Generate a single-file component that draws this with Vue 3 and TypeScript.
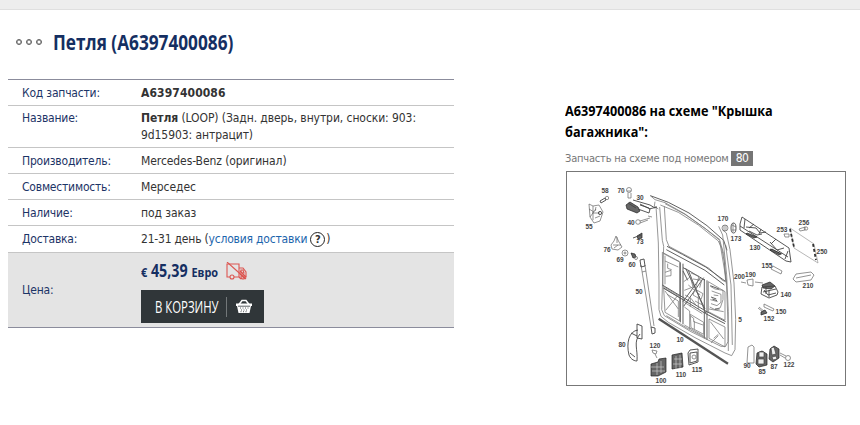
<script setup lang="ts">
import { ref } from 'vue'

interface Label {
  n: string
  x: number
  y: number
}

const partCode = ref('A6397400086')

const labels: Label[] = [
  { n: '58', x: 605, y: 193 }, { n: '70', x: 621, y: 193 }, { n: '30', x: 640, y: 200 },
  { n: '55', x: 589, y: 229 }, { n: '40', x: 631, y: 225 }, { n: '73', x: 640, y: 244 },
  { n: '76', x: 607, y: 252 }, { n: '69', x: 620, y: 262 }, { n: '60', x: 632, y: 267 },
  { n: '50', x: 639, y: 294 }, { n: '170', x: 723, y: 221 }, { n: '173', x: 736, y: 241 },
  { n: '130', x: 755, y: 250 }, { n: '253', x: 782, y: 232 }, { n: '256', x: 804, y: 225 },
  { n: '250', x: 822, y: 254 }, { n: '155', x: 767, y: 268 }, { n: '200', x: 739.5, y: 279 },
  { n: '190', x: 750.5, y: 277 }, { n: '210', x: 808, y: 288 }, { n: '140', x: 786, y: 297 },
  { n: '150', x: 781, y: 314 }, { n: '152', x: 769, y: 321 }, { n: '5', x: 740, y: 322 },
  { n: '10', x: 680, y: 342 }, { n: '80', x: 622, y: 347 }, { n: '120', x: 655, y: 348 },
  { n: '100', x: 661, y: 383 }, { n: '110', x: 681, y: 377 }, { n: '115', x: 697, y: 372 },
  { n: '90', x: 747, y: 368 }, { n: '85', x: 762, y: 374 }, { n: '87', x: 774, y: 369 },
  { n: '122', x: 789, y: 367 },
]
</script>

<template>
  <div class="page">
    <div class="topbar"></div>
    <div class="content">
      <div class="product">
        <div class="head">
          <span class="dots"><i></i><i></i><i></i></span>
          <h1><span>Петля ({{ partCode }})</span></h1>
        </div>
        <dl class="info">
          <div class="row">
            <dt>Код запчасти:</dt>
            <dd><b class="code">{{ partCode }}</b></dd>
          </div>
          <div class="row name">
            <dt>Название:</dt>
            <dd><b>Петля</b> (LOOP) (Задн. дверь, внутри, сноски: 903:<br>9d15903: антрацит)</dd>
          </div>
          <div class="row">
            <dt>Производитель:</dt>
            <dd>Mercedes-Benz (оригинал)</dd>
          </div>
          <div class="row">
            <dt>Совместимость:</dt>
            <dd>Мерседес</dd>
          </div>
          <div class="row">
            <dt>Наличие:</dt>
            <dd>под заказ</dd>
          </div>
          <div class="row delivery">
            <dt>Доставка:</dt>
            <dd>21-31 день (<a>условия доставки</a><span class="help">?</span>)</dd>
          </div>
          <div class="row price">
            <dt>Цена:</dt>
            <dd>
              <div class="sum">
                <span class="amount"><small>€</small> 45,39 <small>Евро</small></span>
                <svg class="truck" viewBox="0 0 22 18" width="22" height="18">
                  <path d="M4 15H1V2h12v13H8M13 6h4l3 4v5h-1M15 8h2l1 3h-3z" />
                  <path d="M14 12l4 4M16 11l4 4M13 15l2 2M14 9l3 3" />
                  <circle cx="6" cy="15" r="2" />
                  <circle cx="17" cy="15" r="2" />
                  <path d="M1 0l19 17" />
                </svg>
              </div>
              <button class="buy">
                <span class="buy-text"><span>В КОРЗИНУ</span></span>
                <svg viewBox="0 0 16 15" width="16" height="15">
                  <path class="handle" d="M3 5.500L6 1.500h4l3 4" />
                  <path class="body" d="M0 4.500h16v2.500h-1l-1.500 7h-11L1 7H0z" />
                  <path class="mesh" d="M2 7.200h12M4 9h1M6.500 9h1M9 9h1M11.500 9h1M5 11h1M7.500 11h1M10 11h1M4.500 12.700h1M7 12.700h1M9.500 12.700h1" />
                </svg>
              </button>
            </dd>
          </div>
        </dl>
      </div>

      <div class="scheme">
        <h2><span>{{ partCode }} на схеме "Крышка<br>багажника":</span></h2>
        <p>Запчасть на схеме под номером <b>80</b></p>
        <svg class="drawing" viewBox="566 171 280 215" width="280" height="215">
          <!-- door, drawn at three times its size -->
          <g class="door" transform="translate(645 185) scale(0.3333)">
            <path class="heavy" d="M16 32l54 20 62 32 54 38 50 44 10 30" />
            <path d="M16 32l14 12 30 9 60 34 64 46 42 32M30 50l-2 14 12 8" />
            <path d="M33 64l7 110 2 120 0 80 6 20 22 18 80 46 90 46 20 8 10-18 2-90-5-110-12-100-11-50-10-8" />
            <path d="M44 66l8 100 4 18-6 190 8 18 80 48 90 44 14 0 7-14 1-90-5-110-12-120-12-26" />
            <path d="M58 64l6 100 8 20 60 32 60 34 40 36 10 4-4-60-8-40-10-22-60-48-60-38-54-22" />
            <path class="heavy" d="M66 184l46 24 70 38 58 42M64 194l56 30 60 32 58 44" />
            <path d="M60 56l60 32 60 42 44 36 12 40 8 90M224 168l20 120 6 150 0 60M242 180l16 120 4 180" />
            <path d="M52 202l2 102 50 30V230zM56 206l46 24M60 212v86M60 228l40 18M60 262l18-6v16l-16 2M68 236v14l12 4" />
            <path d="M56 310l48 28v70l-44-26zM60 318l40 54M62 376l36-44M66 328l34 20v48" />
            <path class="heavy" d="M106 232v180M114 236v182M178 282v178M186 286v178M52 300l60 36 70 42 60 32M54 308l60 36 68 42 58 30" />
            <path class="heavy" d="M114 248l16 8 52 128M122 250l58 122M176 278l-60 86M168 276l-54 74M130 256l50 30M114 258l14 28" />
            <path d="M116 290l20-14 8 30-26 10M138 264l24 10-10 34M150 312l24 14-6 18-24-14zM120 330l18 10 16 22M130 300l36 30M144 282l26 4-6 22M118 352l54 34M136 340v26M160 330v42M150 348l26 14" />
            <path d="M190 290l50 30v86l-50-26zM196 304l14 8 24 4v28l-8 24-16 6-16-8M200 318l28 10v24l-12 10-18-6M196 344l22 6M206 330l14 2M192 372l44 8" />
            <path class="heavy" d="M196 302l26 10M210 372l14 0M202 342l14 5M198 336l16 6" />
            <path d="M192 402l48 24v60l-48-26zM198 474l22-22M206 460l14-12M196 410l40 52" />
            <path d="M136 388l40 24v36l-38-20zM138 394l8 6v10l28 10M118 366l16 12v54M148 408v24M118 420l60 34M64 392l60 36 60 32" />
            <path class="rail" d="M41 401L249 536" />
          </g>
          <!-- latch plate 55 and its screw -->
          <g class="part">
            <path d="M589 204l4 2 6-1 4 7-3 9-6 2-4-6z" />
            <path d="M592 213h8M593 206v14M589 209l5 3M590 217l6-8M595 218l5-2M596 207l-1 4" />
            <circle class="bold" cx="600" cy="213" r="1.600" />
            <path class="bold" d="M600 201l5-3 1 2-5 3z" />
            <circle cx="607" cy="198" r="1.700" />
          </g>
          <!-- hinge 30 with bolts -->
          <g class="part">
            <circle cx="629" cy="190" r="2.500" />
            <path d="M628 193v5h3v-5M627 191h4" />
            <path class="dark" d="M626 205l4-3 8 5 2 4-3 2-10-4z" />
            <path d="M633 200l17 5 5 3M638 209l11 4 1-4-10-5M628 203l8 5M640 205l9 3M649 209l8-2" class="bold" />
            <circle cx="638" cy="222" r="2.300" />
            <path d="M640 221l10-3M640 223l8-3M652 217l-4-1" />
            <path class="dark" d="M637 236l5-3v5l-4 1z" />
            <path d="M633 238l8-3" class="bold" />
          </g>
          <!-- gas spring -->
          <g class="part">
            <path d="M616 236l3 6 3 5-4 3-6-1-1-4 3-4zM613 245h8M617 237v6M614 248l4-3" />
            <circle cx="625" cy="253" r="3" /><circle cx="625" cy="253" r="1" />
            <path class="dark" d="M631 253l4 1 1 3-3 1z" />
            <circle cx="636" cy="258" r="1.500" />
            <path d="M641 265l10 62M645 265l9 61M642 272l4-1" />
            <path d="M640 260l4-1 1 7-4 1zM651 327l4 1v5l-3 1z" class="bold" />
          </g>
          <!-- handle 80 -->
          <g class="part">
            <path class="bold" d="M637 324l5 2v13l-5-1zM638 330c-9 1-12 13-9 25 2 5 6 6 8 6 1-12-4-19 3-27M631 333l6 3M630 353l5 4" />
          </g>
          <!-- trim 130 and plate 250 -->
          <g class="part">
            <circle cx="725" cy="228" r="3" /><path d="M724 225v6M726 225v6" />
            <ellipse cx="733.500" cy="228" rx="2.500" ry="5" class="bold" /><path d="M732 225l4 2M732 230h4M733 223v9" />
            <path d="M742 217l47 31 2 14-5-1-46-31v-6z" class="bold" />
            <path d="M740 226l48 31M745 219l-1 9M746 227l10 1 4 5 6-1M770 242l7 8 7-2M749 231l8 4 5-1M770 249l12 5M754 224l-5 4M761 229l-2 5M776 239l-5 5M788 251l-3 8" class="bold" />
            <path class="dark" d="M747 233l10 4-3 1-8-4zM772 249l9 5-2 1-9-5z" />
            <path class="plate" d="M790 228l24 16 4 19-24-15z" />
            <path d="M790 229l4 18M813 244l3 16" class="dash" />
            <path d="M784 234h5v3h-4zM799 229l6-2v3l-5 1z" />
            <circle cx="806" cy="228.500" r="1.700" />
            <path d="M773 266l9 5-1 3-10-5z" />
            <path d="M793 279l3-5 15-2 3 3-3 5-15 2zM796 278l15-3" />
          </g>
          <!-- lock 140, bulbs 150 and 152 -->
          <g class="part">
            <path d="M741 282l5 1M747 280l6-1v7l-5-1zM755 282l8 1" />
            <path class="dark" d="M762 285l8-3 5 4-4 3-8-1z" />
            <path d="M762 287l13-1 3 6-1 3-8 3-8-4zM764 290l4 5 8-2M769 290v7M763 292l13-3M766 287v7" class="bold" />
            <path d="M764 304l10 5-1 2-9-4zM758 308l5 4M759 307l6 5" />
            <path class="dark" d="M761 312l4-2 2 3-6 2z" />
          </g>
          <!-- brackets -->
          <g class="part">
            <path class="dark" d="M651 364l7-2 1-3 7-1v14l-8 4-7 0z" />
            <path class="mesh" d="M651 367h13M652 371h13M661 361v12M657 363v12" />
            <path class="dark" d="M672 355l10-2 1 14-11 2z" />
            <path class="mesh" d="M674 359h8M673 364h9M676 356v13M680 355v13" />
            <path d="M688 353l2-3 8-1v13l-9 3zM690 353l7-1v9l-7 2z" class="bold" />
            <circle cx="694" cy="357" r="2" />
            <path d="M652 350l5 1-1 3-3-1zM655 354l2 4" />
            <path d="M748 347l4-2 2 2v16h-7z" />
            <path class="dark" d="M757 353l5-2 5 3v11l-8 2-3-3z" />
            <path class="white" d="M759 352h5v5h-5zM758 359h6v5h-6z" />
            <path class="dark" d="M770 349l4-3 5 3v9l-6 4-4-3z" />
            <path class="white" d="M771 348l3-1 2 7-4 1zM772 357l4-1 1 3-4 1z" />
            <path d="M780 353l6 3M780 355l5 3" />
            <circle cx="788" cy="358" r="2.500" />
          </g>
          <text v-for="l in labels" :key="l.n" :x="l.x" :y="l.y">{{ l.n }}</text>
        </svg>
      </div>
    </div>
  </div>
</template>

<style>
body {
  margin: 0;
  background: #fff;
}
</style>

<style scoped>
.page {
  width: 860px;
  height: 425px;
  overflow: hidden;
  font-family: "DejaVu Sans Condensed", "Noto Sans", sans-serif;
  font-size: 12px;
  color: #333;
}
.topbar {
  height: 9px;
  background: #ededed;
  border-bottom: 1px solid #dfdfdf;
}
.content {
  display: flex;
  gap: 111px;
  padding-left: 8px;
}
.product {
  width: 446px;
}
.head {
  display: flex;
  align-items: center;
  height: 65px;
  padding-left: 8px;
  padding-bottom: 4px;
}
.dots {
  display: flex;
  gap: 4px;
  width: 37px;
  margin-bottom: 1px;
}
.dots i {
  width: 6px;
  height: 6px;
  border: 1.5px solid #5c5c5c;
  border-radius: 50%;
  box-sizing: border-box;
  box-shadow: inset 0 0 0 0.5px #777;
}
h1, h2 {
  margin: 0;
  font-family: "Open Sans", sans-serif;
  font-weight: 700;
}
h1 {
  margin-top: -2px;
  font-size: 21px;
  line-height: 28px;
  color: #152f62;
  white-space: nowrap;
}
h1 span, h2 span, .buy-text span, .amount {
  display: inline-block;
  transform-origin: left center;
}
h1 span {
  transform: scaleX(0.82);
}
.info {
  margin: 0;
  border-top: 1px solid #8b8c9c;
  border-bottom: 1px solid #8b8c9c;
}
.row {
  display: flex;
  align-items: center;
  height: 25px;
  border-bottom: 1px solid #c5c5c5;
}
dt {
  width: 119px;
  padding-left: 14px;
  color: #1c3466;
  letter-spacing: -0.2px;
  white-space: nowrap;
}
dd {
  margin: 0;
  letter-spacing: -0.08px;
  white-space: nowrap;
}
.code {
  letter-spacing: 0.1px;
}
.name {
  height: 41px;
  line-height: 17px;
}
.name dt {
  align-self: flex-start;
  padding-top: 4px;
}
.delivery {
  height: 26px;
}
.delivery dd {
  display: flex;
  align-items: center;
  letter-spacing: -0.2px;
  white-space: pre;
}
a {
  color: #1c65ad;
}
.help {
  width: 13px;
  height: 13px;
  margin: 0 1px 0 3px;
  border: 1.5px solid #222;
  border-radius: 50%;
  font-weight: 700;
  font-size: 11px;
  line-height: 13px;
  letter-spacing: 0;
  text-align: center;
}
.price {
  height: 74px;
  border-bottom: 0;
  background: #e4e4e4;
}
.sum {
  display: flex;
  height: 36px;
  align-items: center;
}
.sum .amount {
  margin-top: -1px;
}
.sum .truck {
  margin-top: -3px;
}
.amount {
  width: 85px;
  font: 700 17px/24px "Open Sans", sans-serif;
  letter-spacing: 0;
  color: #152f62;
  transform: scaleX(0.84);
}
.amount small {
  font-size: 13px;
}
.truck {
  fill: none;
  stroke: #dc5550;
  stroke-width: 1.1;
}
.buy {
  display: flex;
  align-items: center;
  width: 123px;
  height: 33px;
  margin: 0 0 3px;
  padding: 0 0 0 14px;
  border: 0;
  background: #303639;
  color: #fff;
}
.buy-text {
  width: 71px;
  height: 20px;
  margin-right: 9px;
  border-right: 1px solid #727779;
  font: 16px/20px "Open Sans", sans-serif;
  text-align: left;
  white-space: nowrap;
}
.buy-text span {
  transform: scaleX(0.71);
}
.handle {
  fill: none;
  stroke: #fff;
  stroke-width: 1.5;
}
.buy .body {
  fill: #fff;
}
.buy .mesh {
  stroke: #303639;
  stroke-width: 0.8;
}
.scheme {
  width: 282px;
  padding-top: 90px;
}
h2 {
  font-size: 15px;
  line-height: 21px;
  color: #000;
  white-space: nowrap;
}
h2 span {
  transform: scaleX(0.845);
}
.scheme p {
  display: flex;
  align-items: center;
  height: 15px;
  margin: 9px 0 5px;
  font-size: 11px;
  letter-spacing: -0.19px;
  color: #777;
  white-space: nowrap;
}
.scheme p b {
  margin-left: 2px;
  padding: 0 5px;
  background: #757575;
  color: #fff;
  font-weight: 400;
  font-size: 12px;
  line-height: 15px;
  letter-spacing: -0.6px;
}
.drawing {
  display: block;
  margin-left: 1px;
  outline: 1px solid #777;
  outline-offset: -1px;
}
.drawing path, .drawing circle, .drawing ellipse {
  fill: none;
  stroke: #666;
  stroke-width: 0.7;
}
.drawing .door path {
  stroke: #777;
  stroke-width: 2.3;
}
.drawing .door .heavy {
  stroke: #555;
  stroke-width: 2.8;
}
.drawing .door .rail {
  stroke: #555;
  stroke-width: 7;
}
.drawing .bold {
  stroke: #444;
  stroke-width: 0.9;
}
.drawing .dark {
  fill: #666;
  stroke: #222;
}
.drawing .mesh {
  stroke: #ccc;
}
.drawing .plate {
  stroke: #999;
}
.drawing .dash {
  stroke: #333;
  stroke-width: 1.8;
  stroke-dasharray: 3 2;
}
.drawing .white {
  fill: #eee;
  stroke: #444;
}
.drawing text {
  font: 700 6.5px "Liberation Sans", sans-serif;
  fill: #444;
  text-anchor: middle;
}
</style>
